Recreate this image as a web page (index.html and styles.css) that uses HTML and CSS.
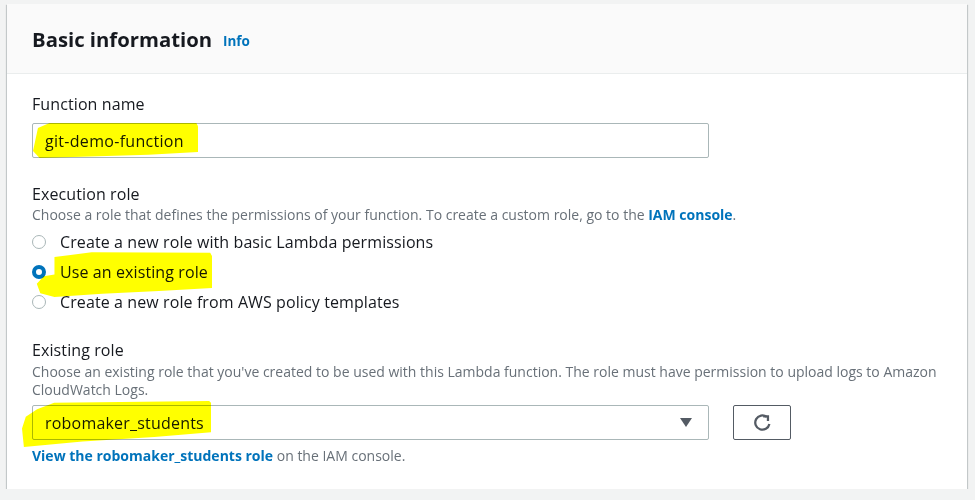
FILE: index.html
```html
<!DOCTYPE html>
<html lang="en">
<head>
<meta charset="utf-8">
<title>Basic information</title>
<link rel="stylesheet" href="styles.css">
</head>
<body>
<div class="card">
  <div class="card-header">
    <h2 class="title">Basic information</h2>
    <a class="info" href="#">Info</a>
  </div>
  <div class="card-body">
    <div class="field">
      <div class="label">Function name</div>
      <div class="input">git-demo-function</div>
    </div>

    <div class="field field-exec">
      <div class="label">Execution role</div>
      <div class="desc">Choose a role that defines the permissions of your function. To create a custom role, go to the <a class="link" href="#">IAM console</a>.</div>
      <div class="radios">
        <div class="radio-row"><span class="radio"></span><span>Create a new role with basic Lambda permissions</span></div>
        <div class="radio-row"><span class="radio checked"></span><span>Use an existing role</span></div>
        <div class="radio-row"><span class="radio"></span><span>Create a new role from AWS policy templates</span></div>
      </div>
    </div>

    <div class="field field-existing">
      <div class="label">Existing role</div>
      <div class="desc desc-tight">Choose an existing role that you've created to be used with this Lambda function. The role must have permission to upload logs to Amazon CloudWatch Logs.</div>
      <div class="select-row">
        <div class="select">
          <span>robomaker_students</span>
          <span class="caret"></span>
        </div>
        <button class="refresh" type="button" aria-label="Refresh">
          <svg width="19" height="19" viewBox="0 0 16 16" fill="none" stroke="#545b64" stroke-width="1.9" stroke-linecap="butt" stroke-linejoin="miter">
            <path d="M13.8 9.2 A6 6 0 1 1 11.6 3.3"/>
            <path d="M8.6 2.8 H12.6 V6.8"/>
          </svg>
        </button>
      </div>
      <div class="hint"><a class="link" href="#">View the robomaker_students role</a> on the IAM console.</div>
    </div>
  </div>

  <div class="hl hl-name"></div>
  <div class="hl hl-radio"></div>
  <div class="hl hl-select"></div>
</div>
</body>
</html>
```

FILE: styles.css
```css
* { box-sizing: border-box; }

body {
  margin: 0;
  padding: 4px 8px 0 7px;
  background: #f2f3f3;
  font-family: "Open Sans", "Noto Sans", "Liberation Sans", sans-serif;
  color: #16191f;
}

.card {
  position: relative;
  width: 960px;
  background: #ffffff;
  box-shadow: 0 1px 1px 0 rgba(0, 28, 36, 0.3), 1px 1px 1px 0 rgba(0, 28, 36, 0.15), -1px 1px 1px 0 rgba(0, 28, 36, 0.15);
}

.card-header {
  height: 70px;
  display: flex;
  align-items: center;
  gap: 11px;
  padding: 0 25px;
  background: #fafafa;
  border-bottom: 1px solid #eaeded;
}

.title {
  margin: 0;
  font-size: 20.3px;
  font-weight: 700;
  line-height: 26px;
  color: #16191f;
}

.info {
  font-size: 13.5px;
  font-weight: 700;
  color: #0073bb;
  text-decoration: none;
  margin-top: 4px;
}

.card-body {
  padding: 19px 25px 24px;
}

.label {
  font-size: 16px;
  letter-spacing: 0.1px;
  line-height: 22px;
  color: #16191f;
}

.input {
  margin-top: 8px;
  width: 677px;
  height: 35px;
  border: 1px solid #aab7b8;
  border-radius: 2px;
  padding: 0 12px;
  display: flex;
  align-items: center;
  font-size: 16px;
  letter-spacing: 0.3px;
}

.field-exec { margin-top: 25px; }

.desc {
  font-size: 14px;
  line-height: 20px;
  color: #687078;
}

.desc-tight {
  line-height: 18px;
  margin-top: 2px;
}

.link {
  color: #0073bb;
  font-weight: 700;
  text-decoration: none;
}

.radios {
  margin-top: 2px;
  display: flex;
  flex-direction: column;
}

.radio-row {
  height: 30px;
  display: flex;
  align-items: center;
  gap: 14px;
  font-size: 16px;
  letter-spacing: 0.1px;
}

.radio {
  width: 14px;
  height: 14px;
  border-radius: 50%;
  border: 1.5px solid #aab7b8;
  background: #fff;
  flex: none;
}

.radio.checked {
  border: 4px solid #0073bb;
}

.field-existing { margin-top: 22px; }

.select-row {
  margin-top: 6px;
  display: flex;
  gap: 24px;
}

.select {
  width: 677px;
  height: 35px;
  border: 1px solid #aab7b8;
  border-radius: 2px;
  padding: 0 16px 0 12px;
  display: flex;
  align-items: center;
  justify-content: space-between;
  font-size: 16px;
  letter-spacing: 0.2px;
}

.caret {
  width: 0;
  height: 0;
  border-left: 6px solid transparent;
  border-right: 6px solid transparent;
  border-top: 9px solid #545b64;
}

.refresh {
  width: 58px;
  height: 35px;
  border: 1px solid #545b64;
  border-radius: 2px;
  background: #fff;
  display: flex;
  align-items: center;
  justify-content: center;
  padding: 0;
}

.hint {
  margin-top: 7px;
  font-size: 14px;
  line-height: 18px;
  color: #687078;
}

.hl {
  position: absolute;
  background: #ffff00;
  mix-blend-mode: multiply;
  pointer-events: none;
}

.hl-name {
  left: 26px; top: 119px; width: 165px; height: 35px;
  clip-path: polygon(3% 14%, 10% 0%, 99% 0%, 100% 9%, 100% 83%, 70% 91%, 4% 100%, 0% 80%);
}

.hl-radio {
  left: 28px; top: 246px; width: 177px; height: 47px;
  clip-path: polygon(11% 15%, 32% 5%, 99% 6%, 100% 13%, 100% 81%, 70% 87%, 38% 93%, 11% 100%, 3% 92%, 1% 72%, 5% 56%, 11% 52%);
}

.hl-select {
  left: 15px; top: 397px; width: 189px; height: 46px;
  clip-path: polygon(2% 34%, 8% 18%, 17% 4%, 99% 0%, 100% 4%, 100% 68%, 70% 78%, 32% 88%, 1% 100%, 0% 60%);
}
```
